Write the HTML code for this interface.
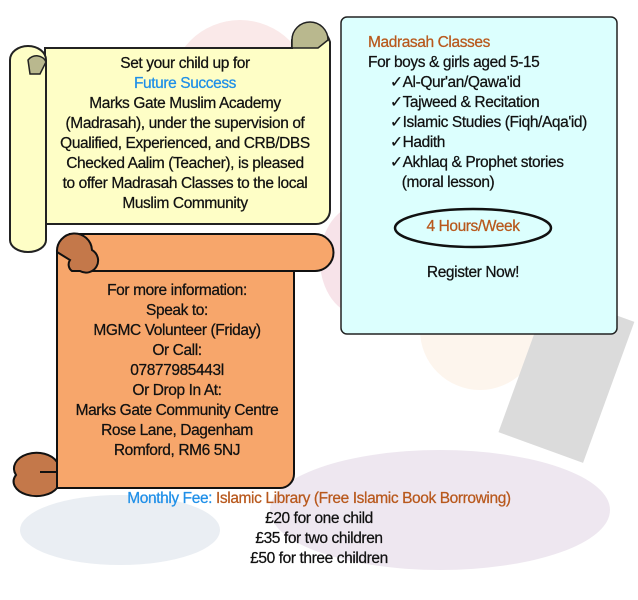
<!DOCTYPE html><html><head><style>
body{margin:0;width:638px;height:600px;background:#fff;position:relative;overflow:hidden;font-family:"Liberation Sans",sans-serif;font-size:15.5px;color:#111;letter-spacing:-0.4px;-webkit-text-stroke:0.25px}
.t{position:absolute;white-space:nowrap}
.c{text-align:center}
</style></head><body>
<svg width="638" height="600" style="position:absolute;left:0;top:0">
<g opacity="0.18">
<ellipse cx="120" cy="530" rx="100" ry="35" fill="#8aa0b8"/>
<ellipse cx="440" cy="510" rx="170" ry="60" fill="#a07aa8"/>
<ellipse cx="480" cy="330" rx="60" ry="60" fill="#f3c59b"/>
<rect x="520" y="300" width="90" height="150" fill="#333" transform="rotate(20 560 380)"/>
<ellipse cx="360" cy="260" rx="40" ry="55" fill="#d06080"/>
<ellipse cx="240" cy="90" rx="70" ry="70" fill="#e08080"/>
</g>
<!-- yellow scroll -->
<path d="M45 48 H292 V40 A20 20 0 0 1 330 42 V210 A14 14 0 0 1 316 224 H45 Z" fill="#fefec6" stroke="#222" stroke-width="2"/>
<path d="M292 40 A18 18 0 0 1 328 40 L318 48 H292 Z" fill="#b9b88e" stroke="#222" stroke-width="1.5"/>
<path d="M10 60 A18 14 0 0 1 46 60 V240 A18 12 0 0 1 10 240 Z" fill="#fefec6" stroke="#222" stroke-width="2"/>
<path d="M28 60 A10 9 0 0 1 46 62 L40 74 H30 Z" fill="#b9b88e" stroke="#222" stroke-width="1.5"/>
<!-- orange scroll -->
<path d="M57 250 V472 H40 V488 H280 A14 14 0 0 0 294 474 V270" fill="#f7a66b" stroke="#111" stroke-width="2"/>
<path d="M70 234 H315 A18 18 0 0 1 315 271 H75 Z" fill="#f7a66b" stroke="#111" stroke-width="2"/>
<path d="M57 252 A17 17 0 0 1 92 250 A12 12 0 0 1 80 271 H72 A8 8 0 0 1 70 260 Z" fill="#c4784a" stroke="#111" stroke-width="2"/>
<path d="M57 462 A20 14 0 0 0 16 475 A22 14 0 0 0 57 488 Z" fill="#c4784a" stroke="#111" stroke-width="2"/>
<path d="M40 472 H57" stroke="#111" stroke-width="2"/>
<!-- cyan box -->
<rect x="341" y="17" width="276" height="317" rx="6" fill="#dcfffe" stroke="#222" stroke-width="1.5"/>
<ellipse cx="473" cy="228" rx="78" ry="19" fill="none" stroke="#111" stroke-width="2.5"/>
</svg>
<div class="t c" style="left:30px;width:310px;top:54px;line-height:20px">Set your child up for<br><span style="color:#1e8fe8">Future Success</span></div>
<div class="t c" style="left:30px;width:310px;top:94px;line-height:20px">Marks Gate Muslim Academy<br>(Madrasah), under the supervision of<br>Qualified, Experienced, and CRB/DBS<br>Checked Aalim (Teacher), is pleased<br>to offer Madrasah Classes to the local<br>Muslim Community</div>
<div class="t c" style="left:47px;width:260px;top:281px;line-height:20px">For more information:<br>Speak to:<br>MGMC Volunteer (Friday)<br>Or Call:<br>07877985443l<br>Or Drop In At:<br>Marks Gate Community Centre<br>Rose Lane, Dagenham<br>Romford, RM6 5NJ</div>
<div class="t" style="left:368px;top:33px;line-height:20px;color:#b8581c">Madrasah Classes</div>
<div class="t" style="left:368px;top:53px;line-height:20px">For boys &amp; girls aged 5-15</div>
<div class="t" style="left:390px;top:73px;line-height:20px">✓Al-Qur'an/Qawa'id<br>✓Tajweed &amp; Recitation<br>✓Islamic Studies (Fiqh/Aqa'id)<br>✓Hadith<br>✓Akhlaq &amp; Prophet stories<br>&nbsp;&nbsp;&nbsp;(moral lesson)</div>
<div class="t c" style="left:395px;width:156px;top:218px;color:#b8581c">4 Hours/Week</div>
<div class="t c" style="left:395px;width:156px;top:264px">Register Now!</div>
<div class="t c" style="left:0;width:638px;top:489px;line-height:20px"><span style="color:#1e8fe8">Monthly Fee:</span> <span style="color:#b8581c">Islamic Library (Free Islamic Book Borrowing)</span><br>£20 for one child<br>£35 for two children<br>£50 for three children</div>
</body></html>
